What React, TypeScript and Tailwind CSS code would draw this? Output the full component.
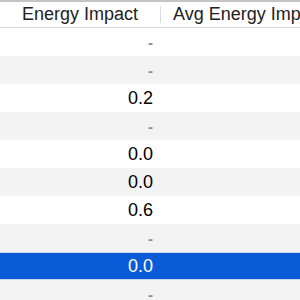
const rows: (string | null)[] = [null, null, "0.2", null, "0.0", "0.0", "0.6", null, "0.0", null];
const selected = 8;

export default function App() {
  return (
    <div className="w-[300px] h-[300px] overflow-hidden bg-white text-[18px] font-['Liberation_Sans',Arial,sans-serif]">
      {/* Column headers */}
      <div className="flex h-[28px] border-t-2 border-b border-t-[#c4c4c4] border-b-[#d6d6d6] bg-white text-[#222] whitespace-nowrap">
        <div className="w-[160px] shrink-0 flex items-center justify-center">Energy Impact</div>
        <div className="w-px shrink-0 my-[4px] bg-[#dcdcdc]" />
        <div className="flex-1 flex items-center pl-[12px] overflow-hidden">Avg Energy Impact</div>
      </div>

      {/* Process rows */}
      {rows.map((value, i) => {
        const isSel = i === selected;
        const bg = isSel
          ? "bg-[#0b5bd8] text-white border-y border-[#c9d6ee]"
          : i % 2 === 0
            ? "bg-white text-black"
            : "bg-[#f3f3f3] text-black";
        return (
          <div key={i} className={`flex h-[28px] items-center ${bg}`}>
            <div className="w-[153px] shrink-0 text-right leading-none">
              {value ?? <span className="text-[#8c8c8c] text-[15px] font-bold">-</span>}
            </div>
          </div>
        );
      })}
    </div>
  );
}
